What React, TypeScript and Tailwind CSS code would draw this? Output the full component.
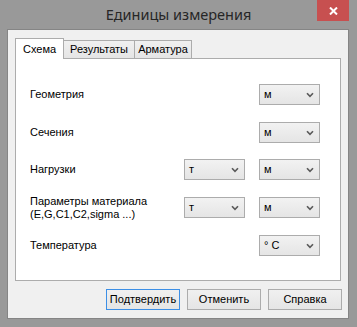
import React from 'react';

const Chevron: React.FC = () => (
  <svg width="8" height="6" viewBox="0 0 8 6" className="shrink-0">
    <polyline points="1,1.2 4,4.4 7,1.2" fill="none" stroke="#5a5a5a" strokeWidth="1.6" />
  </svg>
);

const Combo: React.FC<{ value: string }> = ({ value }) => (
  <div className="w-[61px] h-[21px] flex items-center justify-between pl-[4px] pr-[5px] border border-[#acacac] bg-gradient-to-b from-[#f2f2f2] to-[#e5e5e5] text-black">
    <span className="leading-none whitespace-pre">{value}</span>
    <Chevron />
  </div>
);

const Row: React.FC<{ label: React.ReactNode; first?: string; second: string; className?: string }> = ({
  label,
  first,
  second,
  className,
}) => (
  <div className={`flex items-center h-[21px] ${className ?? ''}`}>
    <div className="flex-1 leading-[13px]">{label}</div>
    <div className="flex gap-[14px]">
      {first ? <Combo value={first} /> : <div className="w-[61px]" />}
      <Combo value={second} />
    </div>
  </div>
);

const Button: React.FC<{ label: string; focused?: boolean }> = ({ label, focused }) => (
  <button
    className={`w-[74px] h-[21px] flex items-center justify-center border bg-gradient-to-b from-[#f0f0f0] to-[#e5e5e5] text-black ${
      focused ? 'border-[#3c8fe6]' : 'border-[#acacac]'
    }`}
  >
    {label}
  </button>
);

export default function App() {
  return (
    <div className="w-[357px] h-[327px] bg-[#999999] flex flex-col overflow-hidden">
      {/* title bar */}
      <div className="relative h-[29px] flex items-center justify-center">
        <span className="text-[14.5px] text-[#262626] mt-[1px]" style={{ fontFamily: '"Noto Sans", sans-serif' }}>
          Единицы измерения
        </span>
        <div className="absolute left-[317px] top-0 w-[32px] h-[21px] bg-[#c75050] flex items-center justify-center">
          <svg width="9" height="8" viewBox="0 0 9 8">
            <path d="M1 0.5 L8 7.5 M8 0.5 L1 7.5" stroke="#ffffff" strokeWidth="2" />
          </svg>
        </div>
      </div>

      {/* client area */}
      <div
        className="ml-[7px] w-[342px] h-[290px] border border-[#858585] bg-[#f0f0f0] flex flex-col pt-[8px] px-[7px] text-[11px]"
        style={{ fontFamily: '"Liberation Sans", Arial, sans-serif' }}
      >
        <div className="flex items-end h-[20px]">
          <div className="relative z-10 -mb-px w-[49px] h-[21px] flex items-center justify-center bg-white border border-b-0 border-[#acacac]">
            Схема
          </div>
          <div className="-ml-px w-[72px] h-[18px] flex items-center justify-center border border-b-0 border-[#acacac] bg-gradient-to-b from-[#f0f0f0] to-[#e5e5e5]">
            Результаты
          </div>
          <div className="-ml-px w-[58px] h-[18px] flex items-center justify-center border border-b-0 border-[#acacac] bg-gradient-to-b from-[#f0f0f0] to-[#e5e5e5]">
            Арматура
          </div>
        </div>

        <div className="h-[223px] bg-white border border-[#acacac] pt-[25px] pl-[14px] pr-[20px] text-black">
          <Row label="Геометрия" second="м" />
          <Row label="Сечения" second="м" className="mt-[17px]" />
          <Row label="Нагрузки" first="т" second="м" className="mt-[16px]" />
          <Row
            label={
              <>
                Параметры материала
                <br />
                (E,G,C1,C2,sigma ...)
              </>
            }
            first="т"
            second="м"
            className="mt-[17px]"
          />
          <Row label="Температура" second="° C" className="mt-[17px]" />
        </div>

        <div className="flex justify-end gap-[7px] mt-[8px] -mr-px">
          <Button label="Подтвердить" focused />
          <Button label="Отменить" />
          <Button label="Справка" />
        </div>
      </div>
    </div>
  );
}
